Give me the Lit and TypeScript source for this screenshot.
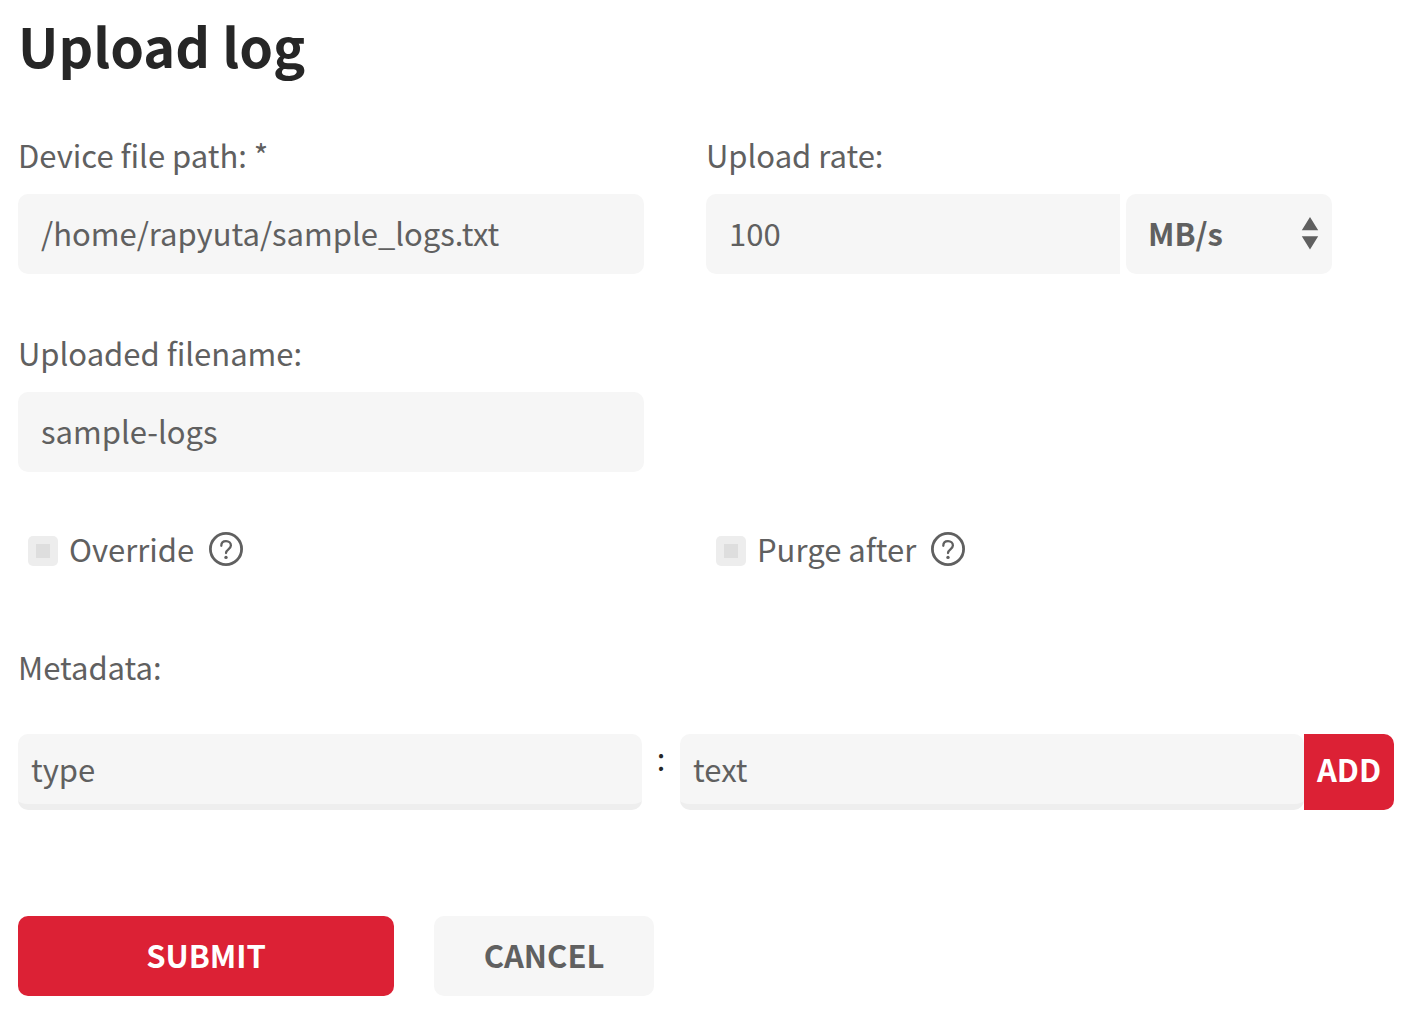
import { LitElement, html, css } from "lit";
import { customElement, property } from "lit/decorators.js";

@customElement("help-button")
class HelpButton extends LitElement {
  @property() topic = "";

  static styles = css`
    :host {
      display: flex;
    }
    .help {
      display: flex;
      padding: 0;
      border: 0;
      background: none;
      color: #606060;
      cursor: pointer;
    }
    .icon {
      display: block;
      width: 34px;
      height: 34px;
    }
  `;

  render() {
    return html`
      <button class="help" type="button" aria-label="Help: ${this.topic}">
        <svg class="icon" viewBox="0 0 34 34" fill="none" stroke="currentColor" aria-hidden="true">
          <circle cx="17" cy="17" r="15.6" stroke-width="2.8" />
          <path
            d="M12.3 13.8C12.3 10.9 14.2 9.2 17 9.2s4.9 1.8 4.9 4.4c0 3.6-4.9 3.9-4.9 7.4"
            stroke-width="2.3"
            stroke-linecap="round"
          />
          <circle cx="17" cy="25.4" r="1.7" fill="currentColor" stroke="none" />
        </svg>
      </button>
    `;
  }
}

@customElement("app-root")
class AppRoot extends LitElement {
  static styles = css`
    :host {
      display: block;
      background: #fff;
      color: #606060;
      font-family: "Noto Sans CJK SC", "Noto Sans", sans-serif;
      font-size: 31px;
      line-height: 48px;
    }
    * {
      box-sizing: border-box;
    }
    .page {
      padding: 5px 18px 16px;
    }
    .title {
      margin: 0 0 46px;
      color: #262626;
      font-size: 54px;
      font-weight: 700;
      line-height: 80px;
    }
    .fields {
      display: grid;
      grid-template-columns: 1fr 1fr;
      row-gap: 55px;
    }
    .field {
      display: flex;
      flex-direction: column;
      gap: 15px;
      min-width: 0;
      padding-right: 62px;
    }
    .field.first {
      grid-column: 1;
    }
    .control {
      width: 100%;
      min-width: 0;
      height: 80px;
      margin: 0;
      padding: 0 23px 3px;
      border: 0;
      border-radius: 10px;
      background: #f6f6f6;
      color: inherit;
      font: inherit;
    }
    .rate {
      display: grid;
      grid-template-columns: minmax(0, 1fr) 206px;
      gap: 6px;
    }
    .amount {
      border-radius: 10px 0 0 10px;
    }
    .unit {
      display: grid;
      align-items: center;
    }
    .unit > * {
      grid-area: 1 / 1;
    }
    .select {
      appearance: none;
      padding: 0 22px 3px;
      font-weight: 700;
    }
    .arrows {
      justify-self: end;
      width: 18px;
      height: 34px;
      margin-right: 13px;
      pointer-events: none;
    }
    .options {
      display: grid;
      grid-template-columns: 1fr 1fr;
      margin-top: 53px;
    }
    .option {
      display: flex;
      align-items: center;
      padding-left: 10px;
    }
    .choice {
      display: flex;
      align-items: center;
      gap: 11px;
      margin-right: 15px;
    }
    .tick {
      appearance: none;
      display: grid;
      place-items: center;
      width: 30px;
      height: 30px;
      margin: 4px 0 0;
      border-radius: 5px;
      background: #ededed;
    }
    .tick::before {
      content: "";
      width: 14px;
      height: 14px;
      background: #dedede;
    }
    .tick:checked::before {
      background: #606060;
    }
    .metadata {
      margin: 70px 0 0;
      padding: 0;
      border: 0;
      min-width: 0;
    }
    .legend {
      margin-bottom: 43px;
      padding: 0;
    }
    .pair {
      display: flex;
    }
    .entry {
      flex: 1;
      height: 76px;
      padding: 0 13px 1px;
      border-bottom: 6px solid #eeeeee;
    }
    .colon {
      width: 38px;
      color: #262626;
      text-align: center;
    }
    .button {
      height: 80px;
      padding: 0 0 3px;
      border: 0;
      border-radius: 10px;
      font: inherit;
      font-weight: 700;
      text-align: center;
      cursor: pointer;
    }
    .primary {
      background: #dc2135;
      color: #fff;
    }
    .secondary {
      background: #f6f6f6;
      color: #606060;
    }
    .add {
      width: 90px;
      height: 76px;
      padding-bottom: 7px;
      border-radius: 0 10px 10px 0;
    }
    .actions {
      display: flex;
      gap: 40px;
      margin-top: 106px;
    }
    .submit {
      width: 376px;
    }
    .cancel {
      width: 220px;
    }
  `;

  render() {
    return html`
      <form class="page" @submit=${(e: Event) => e.preventDefault()}>
        <h1 class="title">Upload log</h1>
        <div class="fields">
          <div class="field first">
            <label for="path">Device file path: *</label>
            <input class="control" id="path" type="text" required value="/home/rapyuta/sample_logs.txt" />
          </div>
          <div class="field">
            <label for="rate">Upload rate:</label>
            <div class="rate">
              <input class="control amount" id="rate" type="text" inputmode="numeric" value="100" />
              <div class="unit">
                <select class="control select" aria-label="Rate unit">
                  <option>MB/s</option>
                  <option>KB/s</option>
                </select>
                <svg class="arrows" viewBox="0 0 18 34" fill="#606060" aria-hidden="true">
                  <path d="M9 0 17.2 13.2H.8zM9 32.5 17.2 19.3H.8z" />
                </svg>
              </div>
            </div>
          </div>
          <div class="field first">
            <label for="filename">Uploaded filename:</label>
            <input class="control" id="filename" type="text" value="sample-logs" />
          </div>
        </div>
        <div class="options">
          <div class="option">
            <label class="choice"><input class="tick" type="checkbox" />Override</label>
            <help-button topic="Override"></help-button>
          </div>
          <div class="option">
            <label class="choice"><input class="tick" type="checkbox" />Purge after</label>
            <help-button topic="Purge after"></help-button>
          </div>
        </div>
        <fieldset class="metadata">
          <legend class="legend">Metadata:</legend>
          <div class="pair">
            <input class="control entry" type="text" aria-label="Metadata key" value="type" />
            <span class="colon">:</span>
            <input class="control entry" type="text" aria-label="Metadata value" value="text" />
            <button class="button primary add" type="button">ADD</button>
          </div>
        </fieldset>
        <div class="actions">
          <button class="button primary submit" type="submit">SUBMIT</button>
          <button class="button secondary cancel" type="button">CANCEL</button>
        </div>
      </form>
    `;
  }
}
